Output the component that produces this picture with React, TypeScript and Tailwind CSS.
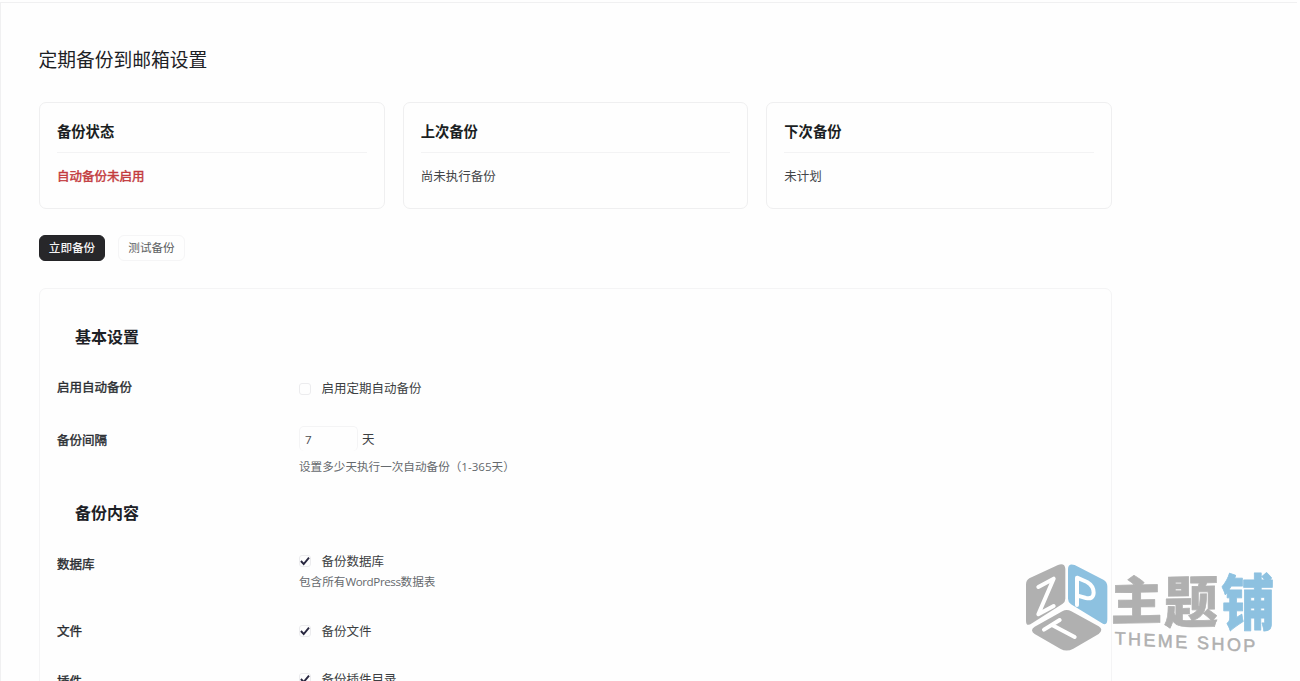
import type { ReactNode } from "react";

function StatusCard({ title, children }: { title: string; children: ReactNode }) {
  return (
    <section className="h-[107px] rounded-[7px] border border-[#efeff0] px-[17px] pt-[17px]">
      <h2 className="h-[33px] border-b border-[#f3f3f4] text-[14.3px] leading-[24px] font-bold text-[#1b1f23]">
        {title}
      </h2>
      <div className="pt-[14px] text-[12.5px] leading-[20px] text-[#434548]">{children}</div>
    </section>
  );
}

function CheckBox({ label, checked = false }: { label: string; checked?: boolean }) {
  return (
    <label className="flex h-[20px] items-center text-[12.5px] leading-[20px] text-[#3c3f42]">
      <span
        className={`mr-[10.5px] flex h-[12px] w-[12px] items-center justify-center rounded-[3px] border border-[#ececee] ${checked ? "-mt-[2px]" : ""}`}
      >
        {checked && (
          <svg viewBox="0 0 12 12" className="h-[12px] w-[12px] shrink-0 overflow-visible">
            <path d="M1.9 6 4.7 9 10 2.7" fill="none" stroke="#292840" strokeWidth="1.9" />
          </svg>
        )}
      </span>
      {label}
    </label>
  );
}

function Row({ title, className, children }: { title: string; className: string; children: ReactNode }) {
  return (
    <div className={`flex ${className}`}>
      <div className="w-[242px] shrink-0 text-[12.5px] leading-[20px] text-[#2b2e32] [-webkit-text-stroke:0.4px_#2b2e32]">
        {title}
      </div>
      <div>{children}</div>
    </div>
  );
}

function Watermark() {
  return (
    <svg
      viewBox="0 0 840 345"
      className="pointer-events-none absolute top-[550px] left-[1010px] h-[115px] w-[280px] overflow-visible"
    >
      <g fill="#b0b0b0">
        <path d="M58 85 144 45Q164 38 166 56V146Q166 156 157 162L66 220Q48 232 48 212V104Q48 91 58 85Z" />
        <path d="M157 184Q170 176 184 184L266 229Q282 239 266 252L190 296Q170 307 152 297L74 252Q58 240 74 230Z" />
      </g>
      <path
        d="M174 58Q174 38 194 45L280 89Q292 96 292 109V208Q292 230 275 219L183 163Q174 156 174 146Z"
        fill="#8dc1e0"
      />
      <g fill="none" stroke="#fff" strokeWidth="12" strokeLinejoin="round" strokeLinecap="round">
        <path d="M85 111 131 86 85 193 131 168" />
        <path d="M201 165V83L231 96Q251 108 251 128 250 149 228 144L203 137" />
        <path d="M102 239 149 210M126 225 194 261" />
      </g>
      <g
        fontFamily="'Noto Sans CJK SC', sans-serif"
        fontWeight="900"
        strokeWidth="2"
        strokeLinejoin="round"
      >
        <text transform="matrix(.98 -.015 0 .98 302 210)" fontSize="158" fill="#b0b0b0" stroke="#b0b0b0">主</text>
        <text transform="matrix(1 -.015 0 1.04 462 219)" fontSize="162" fill="#b0b0b0" stroke="#b0b0b0">题</text>
        <text transform="matrix(1 0 0 1.14 634 224)" fontSize="160" fill="#8dc1e0" stroke="#8dc1e0">铺</text>
      </g>
      <text
        transform="matrix(1 .055 0 1 314 283)"
        fontFamily="'Liberation Sans', sans-serif"
        fontSize="54"
        textLength="422"
        fill="#b0b0b0"
        stroke="#b0b0b0"
        strokeWidth="1.5"
      >
        THEME SHOP
      </text>
    </svg>
  );
}

export default function App() {
  return (
    <div className="relative h-[681px] w-[1300px] overflow-hidden bg-[#fefefe] pt-[2px] font-['Open_Sans','Noto_Sans_CJK_SC',sans-serif]">
      <div className="h-[679px] w-[1297px] border-t border-l border-[#f0f0f1] pt-[43px] pl-[38px]">
        <h1 className="-ml-[0.5px] h-[56px] text-[18.75px] leading-[28px] text-[#1d2125]">定期备份到邮箱设置</h1>

        <div className="grid w-[1073px] grid-cols-3 gap-[18px]">
          <StatusCard title="备份状态">
            <span className="text-[#c33b3e] [-webkit-text-stroke:0.45px_#c33b3e]">自动备份未启用</span>
          </StatusCard>
          <StatusCard title="上次备份">尚未执行备份</StatusCard>
          <StatusCard title="下次备份">未计划</StatusCard>
        </div>

        <div className="mt-[26px] flex gap-[13px] text-[11.6px] leading-[24px]">
          <button className="h-[26px] w-[66px] rounded-[6px] border border-[#242427] bg-[#27272a] font-medium text-[#f5f5f5]">
            立即备份
          </button>
          <button className="h-[26px] w-[67px] rounded-[6px] border border-[#f5f5f6] text-[#5c5e61]">测试备份</button>
        </div>

        <main className="mt-[27px] h-[420px] w-[1073px] rounded-t-[7px] border border-[#f4f4f5] px-[17px] pt-[35px]">
          <h2 className="h-[54px] pl-[18px] text-[16px] leading-[26px] font-bold text-[#1d2126]">基本设置</h2>
          <Row title="启用自动备份" className="h-[53px]">
            <div className="pt-px">
              <CheckBox label="启用定期自动备份" />
            </div>
          </Row>
          <Row title="备份间隔" className="h-[69px]">
            <div className="-mt-[5px] flex h-[25px] items-center text-[12.5px] leading-[20px] text-[#3c3f42]">
              <input
                className="mr-[4px] h-[25px] w-[59px] rounded-[5px] border border-b-0 border-[#f4f4f5] pt-px pl-[5px] text-[11.6px] text-[#4b4d50] outline-none"
                defaultValue="7"
              />
              <span className="pt-[2px]">天</span>
            </div>
            <p className="pt-[6px] text-[11.6px] leading-[20px] text-[#65696d]">设置多少天执行一次自动备份（1-365天）</p>
          </Row>
          <h2 className="h-[55px] pl-[18px] text-[16px] leading-[26px] font-bold text-[#1d2126]">备份内容</h2>
          <Row title="数据库" className="h-[67px]">
            <div className="-mt-[3px]">
              <CheckBox label="备份数据库" checked />
            </div>
            <p className="text-[11.6px] leading-[20px] text-[#65696d]">
              包含所有<span className="tracking-[-0.4px]">WordPress</span>数据表
            </p>
          </Row>
          <Row title="文件" className="h-[50px]">
            <CheckBox label="备份文件" checked />
          </Row>
          <Row title="插件" className="h-[50px]">
            <div className="-mt-[2px]">
              <CheckBox label="备份插件目录" checked />
            </div>
          </Row>
        </main>
      </div>
      <Watermark />
    </div>
  );
}
